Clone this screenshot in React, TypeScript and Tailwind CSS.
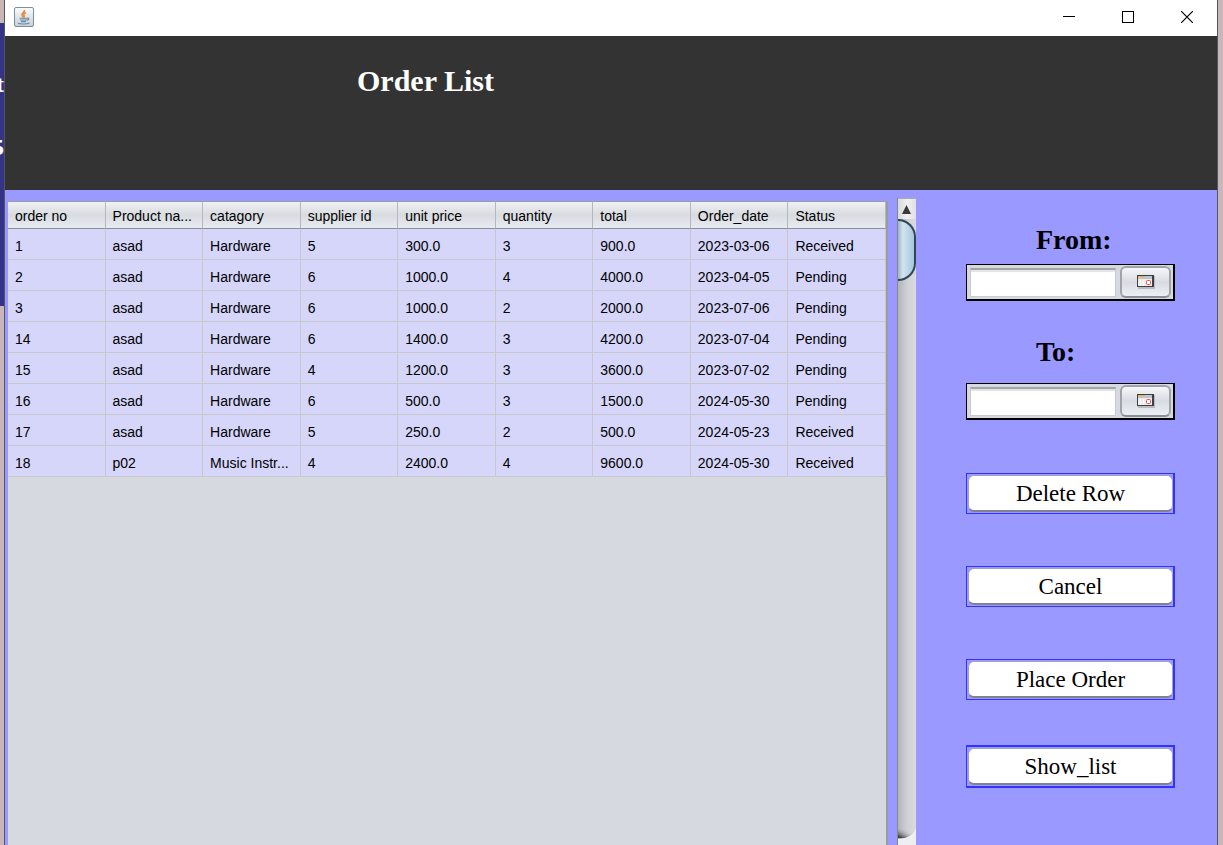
import React from "react";

const columns = [
  "order no",
  "Product na...",
  "catagory",
  "supplier id",
  "unit price",
  "quantity",
  "total",
  "Order_date",
  "Status",
];

const orders = [
  ["1", "asad", "Hardware", "5", "300.0", "3", "900.0", "2023-03-06", "Received"],
  ["2", "asad", "Hardware", "6", "1000.0", "4", "4000.0", "2023-04-05", "Pending"],
  ["3", "asad", "Hardware", "6", "1000.0", "2", "2000.0", "2023-07-06", "Pending"],
  ["14", "asad", "Hardware", "6", "1400.0", "3", "4200.0", "2023-07-04", "Pending"],
  ["15", "asad", "Hardware", "4", "1200.0", "3", "3600.0", "2023-07-02", "Pending"],
  ["16", "asad", "Hardware", "6", "500.0", "3", "1500.0", "2024-05-30", "Pending"],
  ["17", "asad", "Hardware", "5", "250.0", "2", "500.0", "2024-05-23", "Received"],
  ["18", "p02", "Music Instr...", "4", "2400.0", "4", "9600.0", "2024-05-30", "Received"],
];

function JavaIcon() {
  return (
    <svg width="20" height="20" viewBox="0 0 20 20" aria-hidden="true">
      <defs>
        <linearGradient id="java-bg" x1="0" y1="0" x2="0" y2="1">
          <stop offset="0" stopColor="#fdfdfd" />
          <stop offset="1" stopColor="#c6ced6" />
        </linearGradient>
      </defs>
      <rect x="0.5" y="0.5" width="19" height="19" rx="1.5" fill="url(#java-bg)" stroke="#7890a3" />
      <path d="M10.5 3C11 5 7.4 6.2 8 8.2c.3.9 1 1.400 1.200 2.300M12 5.500c-1.800.8-2.800 1.700-2 2.900.5.8.3 1.500-.3 2.100" fill="none" stroke="#e8893c" strokeWidth="1.600" />
      <path d="M5.500 11.200h8M6 13h7.200M7 14.600h5M13.200 11.200c2.200-.6 2.200 1.800-.4 2.100" fill="none" stroke="#6489a3" strokeWidth="1.100" />
      <path d="M4 16.300c2.500 1 8.500 1 11.500-.3" fill="none" stroke="#6489a3" strokeWidth="1.200" />
    </svg>
  );
}

function CalendarIcon() {
  return (
    <svg width="18" height="14" viewBox="0 0 18 14" shapeRendering="crispEdges" aria-hidden="true">
      <rect x="1" y="1" width="17" height="13" fill="#b9bcc0" />
      <rect x="0" y="0" width="17" height="12" fill="#3d3f42" />
      <rect x="1" y="1" width="7" height="1" fill="#f2b13c" />
      <rect x="8" y="1" width="7" height="1" fill="#a9cdf0" />
      <rect x="1" y="2" width="14" height="9" fill="#ededed" />
      <rect x="1" y="2" width="14" height="2" fill="#c4c4c4" />
      <path d="M3.500 5v6M6.500 5v6" stroke="#fff" fill="none" />
      <rect x="9.500" y="5.500" width="4" height="4" rx="1" fill="#fff" stroke="#e8504c" shapeRendering="auto" />
    </svg>
  );
}

function DateField({ id, label }: { id: string; label: string }) {
  return (
    <div className="flex h-[37px] items-center gap-1 border border-r-2 border-b-2 border-black bg-[#d6d9df] pr-0.5 pl-[3px]">
      <input
        id={id}
        type="text"
        className="h-[29px] min-w-0 flex-1 border border-t-2 border-[#c8cbd0] border-t-[#a3a5a9] bg-white px-1 font-['Liberation_Sans',sans-serif] text-sm shadow-[inset_0_2px_1px_#e3e3e3] outline-none"
      />
      <button
        type="button"
        aria-label={label}
        className="flex h-8 w-[51px] items-center justify-center rounded-md border-2 border-[#9fa3aa] border-b-[#8b9098] bg-linear-to-b from-[#f6f7f9] via-[#d8dbe1] to-[#eceff4]"
      >
        <CalendarIcon />
      </button>
    </div>
  );
}

function ActionButton({ children, strong = false }: { children: string; strong?: boolean }) {
  return (
    <div className={strong ? "border-2 border-l border-[#3333ff] p-px pr-0" : "border border-r-2 border-[#3333ff] p-px pr-0"}>
      <button
        type="button"
        className="block h-[37px] w-full rounded-md border border-b-2 border-[#a2a2b8] border-b-[#80828e] bg-white pt-0.5 text-[23px] leading-8 text-black"
      >
        {children}
      </button>
    </div>
  );
}

function ScrollBar() {
  return (
    <div className="mt-2 flex w-[19px] flex-col border-l border-[#85878c] bg-linear-to-r from-[#b2b4b8] via-[#cfd1d5] to-[#d9dbe0]">
      <button
        type="button"
        aria-label="Scroll up"
        className="flex h-[21px] items-center justify-center border-t border-[#aaacb0] bg-linear-to-r from-[#d9dade] via-[#f0f0f2] to-[#dfe0e4] pr-px"
      >
        <svg width="9" height="9" viewBox="0 0 9 9" aria-hidden="true">
          <path d="M4.500 0L9 9H0z" fill="#3a3a3a" />
        </svg>
      </button>
      <div className="h-[62px] rounded-r-[18px] border-2 border-l-0 border-[#2f4656] bg-linear-to-r from-[#9fb4c6] via-[#d3e4f0] via-30% to-[#a5c6dd]" />
      <div className="flex-1" />
      <svg className="block h-[19px] w-[18px]" viewBox="0 0 18 19" aria-hidden="true">
        <defs>
          <linearGradient id="track-end" x1="1" y1="0" x2="0" y2="1">
            <stop offset="0.3" stopColor="#c3c5c9" stopOpacity="0" />
            <stop offset="0.9" stopColor="#3c3d40" />
          </linearGradient>
        </defs>
        <path d="M0 3H18L13 11Q8 13 0 12z" fill="url(#track-end)" />
        <path d="M18 2Q15 12 0 13V19H18z" fill="#eeeff1" />
      </svg>
    </div>
  );
}

function TitleBar() {
  return (
    <div className="flex h-9 items-start justify-between bg-white pr-6 pl-[9px]">
      <div className="pt-[7px]">
        <JavaIcon />
      </div>
      <div className="flex gap-[47px] pt-[11px]">
        <button type="button" aria-label="Minimize" className="block h-3 w-3">
          <svg width="12" height="12" viewBox="0 0 12 12" shapeRendering="crispEdges">
            <path d="M0 5.500h12" stroke="#000" />
          </svg>
        </button>
        <button type="button" aria-label="Maximize" className="block h-3 w-3">
          <svg width="12" height="12" viewBox="0 0 12 12" shapeRendering="crispEdges">
            <rect x="0.500" y="0.500" width="11" height="11" fill="none" stroke="#000" />
          </svg>
        </button>
        <button type="button" aria-label="Close" className="block h-3 w-3">
          <svg width="12" height="12" viewBox="0 0 12 12">
            <path d="M0 0l12 12M12 0L0 12" stroke="#000" strokeWidth="1.200" />
          </svg>
        </button>
      </div>
    </div>
  );
}

function OrderTable() {
  return (
    <div className="min-w-0 flex-1 border-r-2 border-[#9a9ca4] bg-[#d6d9df]">
      <table className="w-full table-fixed border-separate border-spacing-0 text-left font-['Liberation_Sans',sans-serif] text-sm text-black">
        <thead>
          <tr className="h-7 bg-linear-to-b from-[#f2f3f5] via-[#d8dbe0] to-[#e9ecf2]">
            {columns.map((name) => (
              <th
                key={name}
                scope="col"
                className="border-t border-r border-b border-t-[#9a9ca4] border-r-[#b4b7bd] border-b-[#8b9098] p-0 pt-0.5 pl-[7px] font-normal whitespace-nowrap"
              >
                {name}
              </th>
            ))}
          </tr>
        </thead>
        <tbody>
          {orders.map((row) => (
            <tr key={row[0]} className="h-[31px] bg-[#d6d6fa]">
              {row.map((value, i) => (
                <td key={i} className="border-r border-b border-[#c8c8cc] p-0 pt-1 pl-[7px] whitespace-nowrap">
                  {value}
                </td>
              ))}
            </tr>
          ))}
        </tbody>
      </table>
    </div>
  );
}

export default function App() {
  return (
    <div className="flex min-h-screen bg-[#c9b6b8] font-['Liberation_Serif',serif]">
      <div className="w-1 shrink-0 pt-[23px]" aria-hidden="true">
        <div className="flex h-[283px] flex-col items-end overflow-hidden bg-[#333388] pt-[45px] text-2xl leading-8 font-bold text-white">
          <span>t</span>
          <span className="mt-[31px]">5</span>
        </div>
      </div>
      <div className="flex min-w-0 flex-1 flex-col border-r border-l border-[#55555f] bg-[#9999ff]">
        <TitleBar />
        <header className="h-[154px] bg-[#333333] pt-[27px] pl-[352px]">
          <h1 className="text-[30px] leading-9 font-bold text-white">Order List</h1>
        </header>
        <main className="flex flex-1">
          <div className="flex min-w-0 flex-1 pt-[11px] pl-[3px]">
            <OrderTable />
          </div>
          <div className="flex pl-[9px]">
            <ScrollBar />
          </div>
          <aside className="flex w-[301px] shrink-0 flex-col pt-[34px] pr-[42px] pl-[50px]">
            <label htmlFor="from-date" className="mb-2 pl-[70px] text-[28px] leading-8 font-bold text-black">
              From:
            </label>
            <DateField id="from-date" label="Pick start date" />
            <label htmlFor="to-date" className="mt-[35px] mb-[15px] pl-[70px] text-[28px] leading-8 font-bold text-black">
              To:
            </label>
            <DateField id="to-date" label="Pick end date" />
            <div className="mt-[53px] flex flex-col gap-[52px]">
              <ActionButton>Delete Row</ActionButton>
              <ActionButton>Cancel</ActionButton>
              <ActionButton>Place Order</ActionButton>
            </div>
            <div className="mt-[45px]">
              <ActionButton strong>Show_list</ActionButton>
            </div>
          </aside>
        </main>
      </div>
      <div className="w-[5px] shrink-0" />
    </div>
  );
}
